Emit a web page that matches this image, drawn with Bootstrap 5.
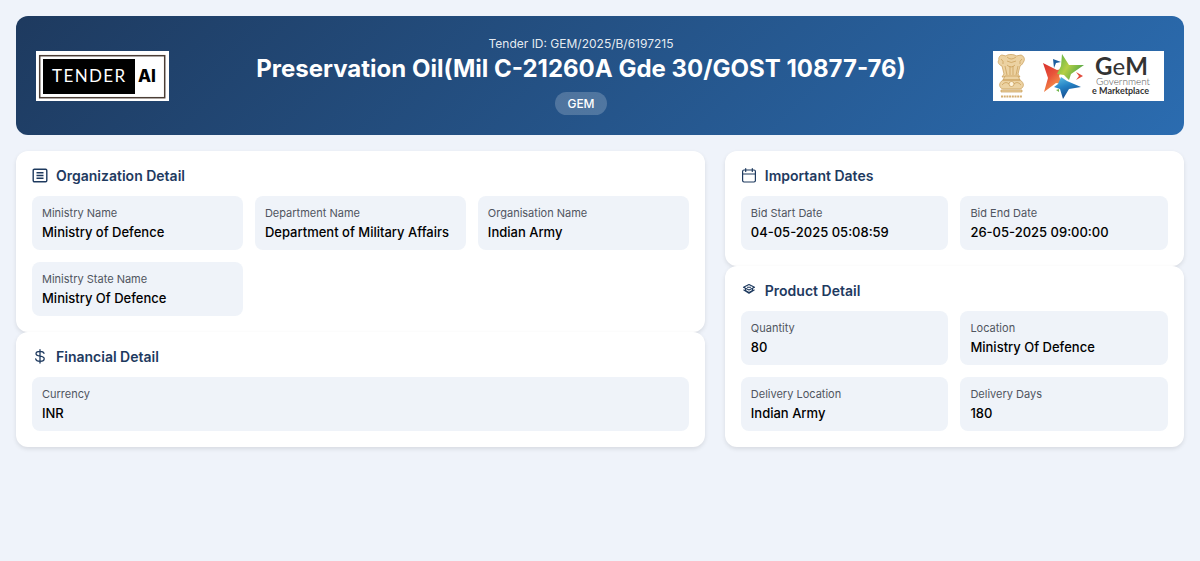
<!DOCTYPE html>
<html lang="en">
<head>
<meta charset="utf-8">
<meta name="viewport" content="width=device-width, initial-scale=1">
<title>Tender GEM/2025/B/6197215</title>
<link href="https://cdn.jsdelivr.net/npm/bootstrap@5.3.0/dist/css/bootstrap.min.css" rel="stylesheet">
<style>
  body { background: #eff3fa; color: #000; font-family: Inter, "Liberation Sans", sans-serif; }
  .tender-hero { background: linear-gradient(135deg, #1e3a5f, #2b6cb0); border-radius: 12px; padding: 20px; }
  .tender-id { font-size: 12px; line-height: 15px; color: rgba(255,255,255,.9); }
  .tender-title { font-size: 24px; line-height: 28px; font-weight: 700; }
  .tender-tag { font-size: 12px; line-height: 15px; font-weight: 500; padding: 4px 12px; background: rgba(255,255,255,.2); }
  .tender-tag-row { margin-top: 9px; }
  .detail-layout { display: grid; grid-template-columns: 1fr; gap: 20px; align-items: start; }
  .panel { background: #fff; border-radius: 12px; box-shadow: 0 2px 4px rgba(0,0,0,.1); }
  .panel-title { font-size: 14px; line-height: 17px; font-weight: 600; color: #1e3a5f; margin-bottom: 12px; }
  .panel-title svg { fill: none; stroke: currentColor; }
  .tiles { display: grid; gap: 12px; grid-template-columns: repeat(auto-fit, minmax(180px, 1fr)); }
  .tile { background: #eff3f9; border-radius: 8px; padding: 10px; }
  .tile dt { font-size: 11px; line-height: 14px; font-weight: 400; color: #505560; margin-bottom: 4px; }
  .tile dd { font-size: 13px; line-height: 16px; font-weight: 500; margin: 0; }
  @media (min-width: 768px) { .detail-layout { grid-template-columns: 3fr 2fr; } }
</style>
</head>
<body>
<main class="container-fluid p-3">
  <header class="tender-hero d-flex flex-wrap flex-md-nowrap align-items-center justify-content-between gap-3 text-white mb-3">
    <svg class="flex-shrink-0" width="133" height="50" viewBox="0 0 133 50" role="img" aria-label="Tender AI">
      <rect width="133" height="50" fill="#fff"/>
      <rect x="3.7" y="4.7" width="125" height="42" fill="#fff" stroke="#4b3d35" stroke-width="1.5"/>
      <rect x="7" y="8" width="92" height="35" fill="#000"/>
      <text x="16" y="31" font-family="Lato" font-size="17" letter-spacing="1.4" fill="#fff">TENDER</text>
      <text x="102" y="31" font-family="Inter" font-size="17" font-weight="800" fill="#000">AI</text>
    </svg>

    <div class="text-center">
      <div class="tender-id mb-1">Tender ID: GEM/2025/B/6197215</div>
      <h1 class="tender-title mb-0">Preservation Oil(Mil C-21260A Gde 30/GOST 10877-76)</h1>
      <div class="tender-tag-row d-flex justify-content-center"><span class="tender-tag rounded-pill">GEM</span></div>
    </div>

    <svg class="flex-shrink-0" width="171" height="50" viewBox="0 0 171 50" role="img" aria-label="Government e Marketplace">
      <defs>
        <linearGradient id="gRed" x1="0" y1="0" x2=".6" y2="1"><stop offset="0" stop-color="#d9302c"/><stop offset=".5" stop-color="#e8533a"/><stop offset="1" stop-color="#f6a04c"/></linearGradient>
        <linearGradient id="gGreen" x1="0" y1="0" x2="1" y2=".6"><stop offset="0" stop-color="#4fae48"/><stop offset=".5" stop-color="#b5cf45"/><stop offset="1" stop-color="#4aa447"/></linearGradient>
        <linearGradient id="gBlue" x1="0" y1="0" x2=".4" y2="1"><stop offset="0" stop-color="#62c3e5"/><stop offset=".5" stop-color="#2482c5"/><stop offset="1" stop-color="#174a8b"/></linearGradient>
      </defs>
      <rect width="171" height="50" fill="#fff"/>
      <!-- Lion capital -->
      <g fill="#ecd2a2" stroke="#c79b55" stroke-width=".7" stroke-linejoin="round">
        <path d="M13 5c1-2 9-2 10 0l5-1c3 1 4 4 3 6s-2 4-4 5l-2 8 2 3H9l2-3-2-8c-3-1-5-4-3-6-1-2 1-5 3-5z"/>
        <path d="M12 25h13l2 4H10zM10 29c-5 3-4 8 0 9h17c4-1 5-6 0-9z"/>
        <path d="M14 6q4 4 9 0M14 10q4 3 9 0M14 14q4 4 8 0M8 8q3 2 2 5M29 8q-3 2-2 5M12 15l2 9M25 15l-2 9M17 15v9M20 15v9" fill="none"/>
        <path d="M9 34q4-5 8 0M20 34q4-5 8 0" fill="none"/>
        <circle cx="18.500" cy="33" r="2.500" fill="#fff4dd"/>
        <path d="M8 39h21v2H8z"/>
      </g>
      <path d="M8 45.500h21" stroke="#d4ad70" stroke-width="1.800" stroke-dasharray="2 .7"/>
      <!-- Five-armed star -->
      <path d="M50 12l14 7 5-1-3 7 3 8-6-1-12 9 4-14z" fill="url(#gRed)"/>
      <path d="M69 3l7 11 15 0-13 9-2 6-5-5-7-1 4-8z" fill="url(#gGreen)"/>
      <path d="M68 26l6 4 14 6-12 2-6 10-3-10-6-2 4-3z" fill="url(#gBlue)"/>
      <path d="M60 8l8 3-5 1-2 5z" fill="#1c5e9f"/>
      <path d="M83 21l7 4-7 4 3-4z" fill="#e14c3d"/>
      <path d="M60 37l3 2 3-1v3z" fill="#70b64a"/>
      <text x="102" y="24" font-family="Lato" font-size="24" font-weight="700" fill="#333">G<tspan font-weight="400">e</tspan>M</text>
      <text x="103" y="34" font-family="Lato" font-size="10" font-weight="300" fill="#555">Government</text>
      <text x="99" y="43" font-family="Lato" font-size="9" font-weight="700" fill="#333">e Marketplace</text>
    </svg>
  </header>

  <div class="detail-layout">
    <div>
      <section class="panel p-3">
        <h2 class="panel-title d-flex align-items-center gap-2">
          <svg width="16" height="16" viewBox="0 0 16 16" stroke-width="1.400" aria-hidden="true"><rect x="1.200" y="1.200" width="13.600" height="12.600" rx="1.200"/><path d="M4.500 4.800h7M4.500 7.500h7M4.500 10.200h7"/></svg>
          Organization Detail
        </h2>
        <dl class="tiles mb-0">
          <div class="tile"><dt>Ministry Name</dt><dd>Ministry of Defence</dd></div>
          <div class="tile"><dt>Department Name</dt><dd>Department of Military Affairs</dd></div>
          <div class="tile"><dt>Organisation Name</dt><dd>Indian Army</dd></div>
          <div class="tile"><dt>Ministry State Name</dt><dd>Ministry Of Defence</dd></div>
        </dl>
      </section>
      <section class="panel p-3">
        <h2 class="panel-title d-flex align-items-center gap-2">
          <svg width="16" height="16" viewBox="0 0 16 16" stroke-width="1.300" stroke-linecap="round" aria-hidden="true"><path d="M8 .7v13.300M12 4.300c-.4-1.400-2-2-4-2-2.300 0-4 .8-4 2.400C4 8.300 12.200 6 12.200 9.700c0 1.700-1.700 2.600-4.200 2.600-2.300 0-4-.8-4.300-2.400"/></svg>
          Financial Detail
        </h2>
        <dl class="tiles mb-0">
          <div class="tile"><dt>Currency</dt><dd>INR</dd></div>
        </dl>
      </section>
    </div>

    <div>
      <section class="panel p-3">
        <h2 class="panel-title d-flex align-items-center gap-2">
          <svg width="16" height="16" viewBox="0 0 16 16" stroke-width="1.200" stroke-linecap="round" aria-hidden="true"><rect x="1.600" y="2" width="12.800" height="12" rx="1.400"/><path d="M1.600 6h12.800M4.700 .7v2.800M11.300 .7v2.800"/></svg>
          Important Dates
        </h2>
        <dl class="tiles mb-0">
          <div class="tile"><dt>Bid Start Date</dt><dd>04-05-2025 05:08:59</dd></div>
          <div class="tile"><dt>Bid End Date</dt><dd>26-05-2025 09:00:00</dd></div>
        </dl>
      </section>
      <section class="panel p-3">
        <h2 class="panel-title d-flex align-items-center gap-2">
          <svg width="16" height="16" viewBox="0 0 16 16" stroke-width="1.100" stroke-linejoin="round" aria-hidden="true"><path d="M8 1.500l5.500 2.700L8 7 2.500 4.200zM2.500 6.700L8 10.300l5.500-3.600M6 4.200h4M4.500 5.500v2l3.500 2 3.500-2v-2"/></svg>
          Product Detail
        </h2>
        <dl class="tiles mb-0">
          <div class="tile"><dt>Quantity</dt><dd>80</dd></div>
          <div class="tile"><dt>Location</dt><dd>Ministry Of Defence</dd></div>
          <div class="tile"><dt>Delivery Location</dt><dd>Indian Army</dd></div>
          <div class="tile"><dt>Delivery Days</dt><dd>180</dd></div>
        </dl>
      </section>
    </div>
  </div>
</main>
<script src="https://cdn.jsdelivr.net/npm/bootstrap@5.3.0/dist/js/bootstrap.bundle.min.js"></script>
</body>
</html>
